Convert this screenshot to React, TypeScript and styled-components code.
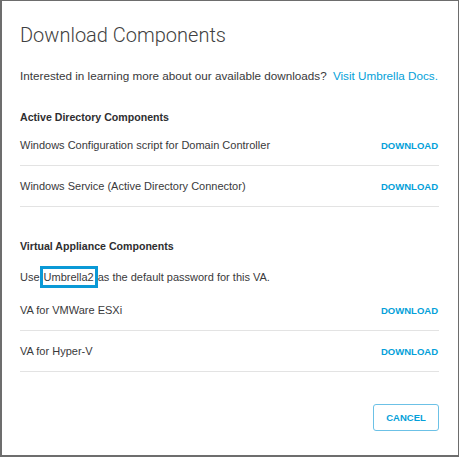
import styled, { createGlobalStyle } from 'styled-components'

const BLUE = `#049fd9`
const TEXT = `#39393b`

const GlobalStyle = createGlobalStyle`
  html, body {
    margin: 0;
    padding: 0;
    background: #ffffff;
  }
  body {
    font-family: "Liberation Sans", Arial, sans-serif;
    color: ${TEXT};
  }
`

interface IRowItem {
  label: string
}

const adItems: IRowItem[] = [
  { label: `Windows Configuration script for Domain Controller` },
  { label: `Windows Service (Active Directory Connector)` },
]

const vaItems: IRowItem[] = [
  { label: `VA for VMWare ESXi` },
  { label: `VA for Hyper-V` },
]

const DownloadRow = ({ label }: IRowItem) => (
  <Row>
    <RowLabel>{label}</RowLabel>
    <DownloadLink href="#">DOWNLOAD</DownloadLink>
  </Row>
)

export default function App() {
  return (
    <>
      <GlobalStyle />
      <Dialog>
        <Title>Download Components</Title>
        <Intro>
          Interested in learning more about our available downloads?{` `}
          <DocsLink href="#">Visit Umbrella Docs.</DocsLink>
        </Intro>

        <Section spacing={24}>
          <SectionHeading>Active Directory Components</SectionHeading>
          {adItems.map((item) => (
            <DownloadRow key={item.label} {...item} />
          ))}
        </Section>

        <Section spacing={31}>
          <SectionHeading>Virtual Appliance Components</SectionHeading>
          <Note>
            Use<Highlight>Umbrella2</Highlight>as the default password for this VA.
          </Note>
          {vaItems.map((item) => (
            <DownloadRow key={item.label} {...item} />
          ))}
        </Section>

        <Footer>
          <CancelButton type="button">CANCEL</CancelButton>
        </Footer>
      </Dialog>
    </>
  )
}

const Dialog = styled.div`
  box-sizing: border-box;
  width: 459px;
  height: 457px;
  padding: 20px 19px 0 18px;
  border: 1px solid #6d6d6d;
  border-left-width: 2px;
  border-bottom-width: 2px;
  background: #ffffff;
  display: flex;
  flex-direction: column;
`

const Title = styled.h1`
  margin: 0;
  font-family: Roboto, "Liberation Sans", sans-serif;
  font-weight: 300;
  font-size: 20px;
  line-height: 28px;
  color: #3f3f41;
`

const Intro = styled.p`
  margin: 18px 0 0;
  font-size: 11.7px;
  line-height: 18px;
  white-space: nowrap;
`

const DocsLink = styled.a`
  margin-left: 3px;
  color: ${BLUE};
  text-decoration: none;
`

interface ISectionProps {
  spacing: number
}

const Section = styled.section<ISectionProps>`
  margin-top: ${({ spacing }) => `${spacing}px`};
  display: flex;
  flex-direction: column;
`

const SectionHeading = styled.h2`
  margin: 0;
  font-size: 10.6px;
  line-height: 16px;
  font-weight: 700;
  color: #2e2e30;
`

const Note = styled.p`
  margin: 14px 0 4px;
  font-size: 11px;
  line-height: 18px;
`

const Highlight = styled.span`
  padding: 2px 1px;
  border: 3px solid #0a99d6;
`

const Row = styled.div`
  height: 40px;
  display: flex;
  align-items: center;
  justify-content: space-between;
  border-bottom: 1px solid #e3e3e3;
`

const RowLabel = styled.span`
  font-size: 11px;
  line-height: 18px;
`

const DownloadLink = styled.a`
  margin-right: 1px;
  font-size: 9.5px;
  font-weight: 700;
  color: ${BLUE};
  text-decoration: none;
`

const Footer = styled.div`
  margin-top: 32px;
  display: flex;
  justify-content: flex-end;
`

const CancelButton = styled.button`
  box-sizing: border-box;
  width: 66px;
  height: 27px;
  padding: 0;
  border: 1px solid #6cc1e6;
  border-radius: 3px;
  background: #ffffff;
  font-family: "Liberation Sans", Arial, sans-serif;
  font-size: 9.5px;
  font-weight: 700;
  color: ${BLUE};
  cursor: pointer;
`
